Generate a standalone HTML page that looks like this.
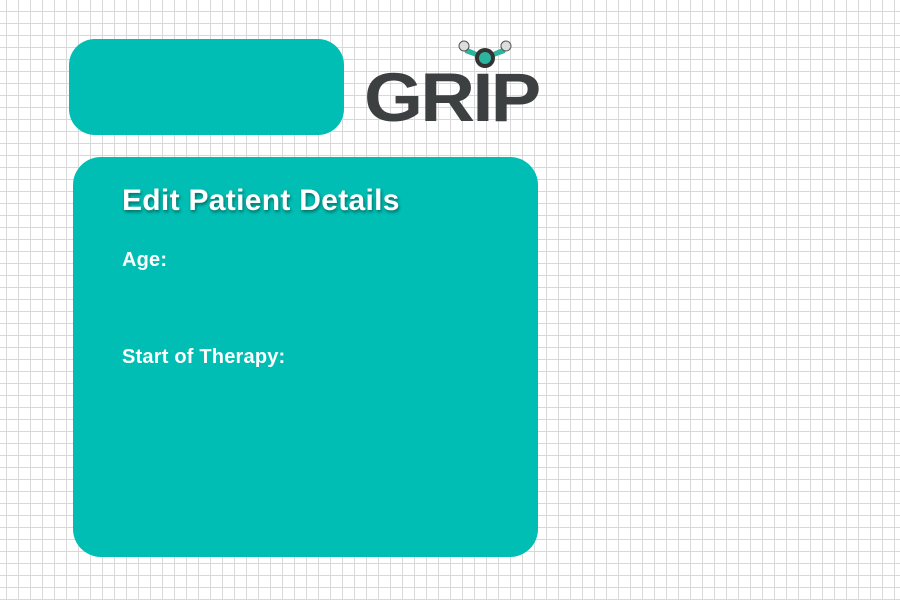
<!DOCTYPE html>
<html><head><style>
body{margin:0;width:900px;height:600px;overflow:hidden;background-color:#fff;
background-image:linear-gradient(to right,#d8d8d8 1px,transparent 1px),linear-gradient(to bottom,#d8d8d8 1px,transparent 1px);
background-size:12px 12px;background-position:6px 11px;font-family:"Liberation Sans",sans-serif;position:relative}
.a{position:absolute;left:69px;top:39px;width:275px;height:96px;background:#00beb3;border-radius:26px}
.card{position:absolute;left:73px;top:157px;width:465px;height:400px;background:#00beb3;border-radius:28px}
h1{position:absolute;left:122px;top:184px;margin:0;color:#fff;font-size:30px;font-weight:bold;letter-spacing:0.3px;text-shadow:1px 2px 3px rgba(0,0,0,.45)}
.l{position:absolute;left:122px;color:#fff;font-weight:bold;font-size:20px;letter-spacing:0.2px}
.logo{position:absolute;left:364px;top:63px;font-size:69px;font-weight:900;color:#3d4040;letter-spacing:-2.5px;line-height:1;transform:scaleX(1.1);transform-origin:left}
</style></head><body>
<div class="a"></div>
<div class="logo">GRIP</div>
<svg style="position:absolute;left:455px;top:38px" width="60" height="36" viewBox="0 0 60 36">
<path d="M8 8 L22 14 L24 20 L10 15Z" fill="#2bb59f"/><path d="M52 8 L38 14 L36 20 L50 15Z" fill="#2bb59f"/>
<circle cx="9" cy="8" r="5" fill="#ddd" stroke="#555" stroke-width="1"/><circle cx="51" cy="8" r="5" fill="#ddd" stroke="#555" stroke-width="1"/>
<circle cx="30" cy="20" r="10" fill="#333"/><circle cx="30" cy="20" r="6" fill="#2bb59f"/></svg>
<div class="card"></div>
<h1>Edit Patient Details</h1>
<div class="l" style="top:249px">Age:</div>
<div class="l" style="top:346px">Start of Therapy:</div>
</body></html>
